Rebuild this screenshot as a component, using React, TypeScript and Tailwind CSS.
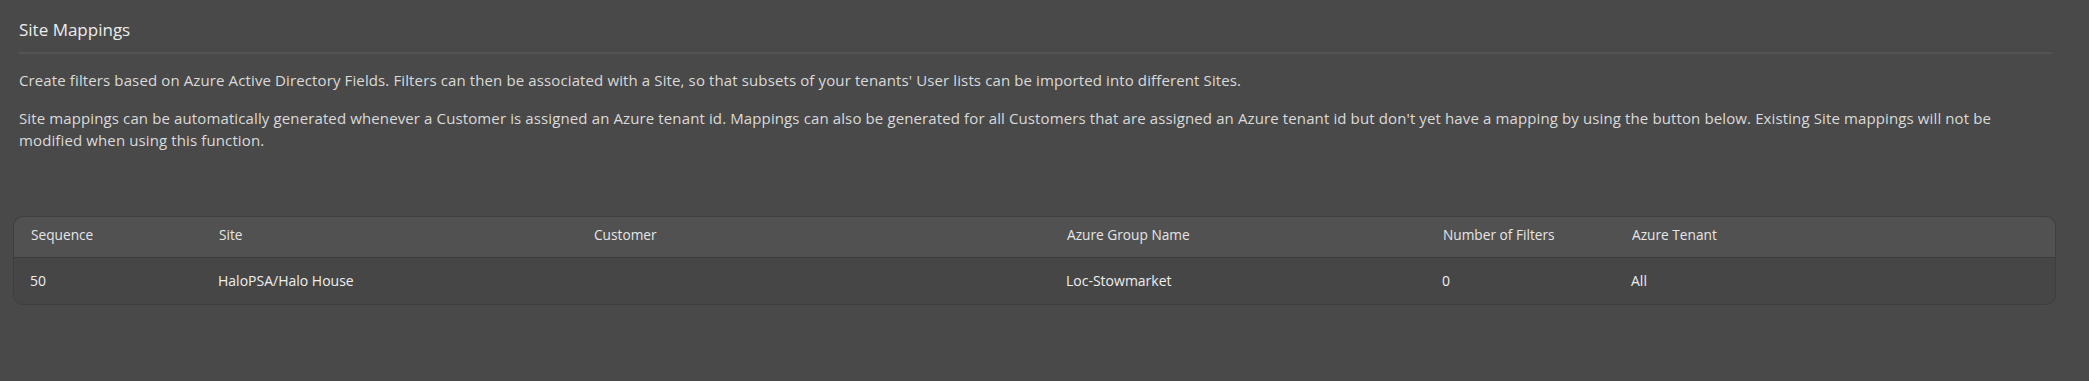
import React from "react";

const cols = ["Sequence", "Site", "Customer", "Azure Group Name", "Number of Filters", "Azure Tenant"];
const row = ["50", "HaloPSA/Halo House", "", "Loc-Stowmarket", "0", "All"];

export default function App() {
  return (
    <div
      className="min-h-[381px] w-full bg-[#494949] pl-[13px] pr-[33px] pt-[18px]"
      style={{ fontFamily: '"Open Sans", "Noto Sans", sans-serif' }}
    >
      <div className="pl-[6px] pr-[4px]">
        <h1 className="text-[17px] leading-[24px] text-[#ececec]">Site Mappings</h1>
        <div className="mt-[10px] h-[2px] bg-[#535353]" />
        <p className="mt-[15px] text-[15px] leading-[22px] tracking-[0.12px] text-[#dadada]">
          Create filters based on Azure Active Directory Fields. Filters can then be associated with a Site, so that subsets of your tenants' User lists can be imported into different Sites.
        </p>
        <p className="mt-[16px] text-[15px] leading-[22px] tracking-[0.12px] text-[#dadada]">
          Site mappings can be automatically generated whenever a Customer is assigned an Azure tenant id. Mappings can also be generated for all Customers that are assigned an Azure tenant id but don't yet have a mapping by using the button below. Existing Site mappings will not be modified when using this function.
        </p>
      </div>
      <div className="mt-[65px] overflow-hidden rounded-[10px] border border-[#3e3e3e] bg-[#464646]">
        <div className="grid grid-cols-[188px_375px_473px_376px_189px_1fr] border-b border-[#3c3c3c] bg-[#515151] pl-[17px] pt-[8px] pb-[12px] text-[13.7px] leading-[20px] text-[#e6e6e6]">
          {cols.map((c) => (
            <div key={c}>{c}</div>
          ))}
        </div>
        <div className="grid grid-cols-[188px_375px_473px_376px_189px_1fr] pl-[16px] pt-[13px] pb-[13px] text-[14px] leading-[20px] text-[#eeeeee]">
          {row.map((c, i) => (
            <div key={i}>{c}</div>
          ))}
        </div>
      </div>
    </div>
  );
}
